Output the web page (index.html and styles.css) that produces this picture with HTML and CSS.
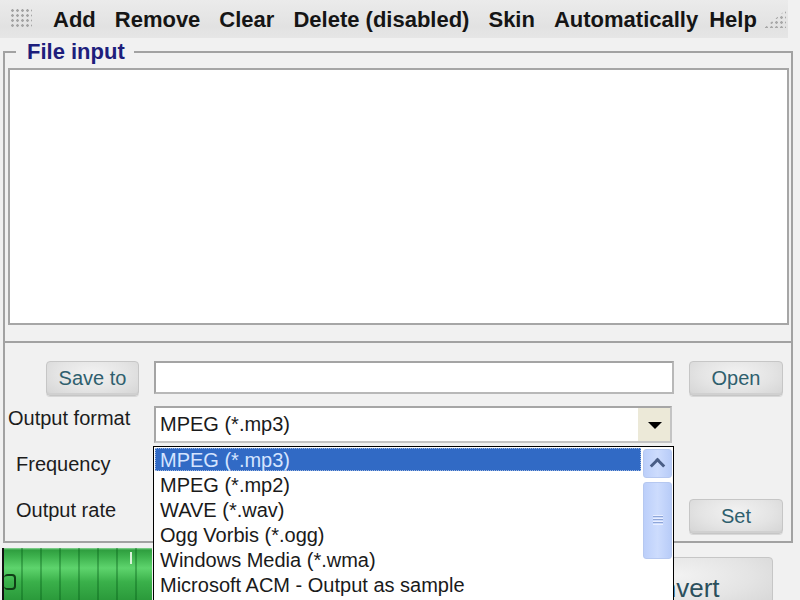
FILE: index.html
```html
<!DOCTYPE html>
<html>
<head>
<meta charset="utf-8">
<link rel="stylesheet" href="styles.css">
</head>
<body>
<div class="toolbar">
  <span class="grip"></span>
  <nav class="menu">
    <span>Add</span>
    <span>Remove</span>
    <span>Clear</span>
    <span>Delete (disabled)</span>
    <span>Skin</span>
    <span>Automatically</span>
    <span class="help">Help</span>
  </nav>
  <span class="grip-r"></span>
</div>

<fieldset class="files">
  <legend>File input</legend>
  <div class="listbox"></div>
</fieldset>

<section class="settings">
  <div class="cell-btn"><button class="btn">Save to</button></div>
  <div class="field"></div>
  <button class="btn">Open</button>

  <label class="lbl">Output format</label>
  <div class="combo"><span class="combo-text">MPEG (*.mp3)</span><span class="combo-arrow"></span></div>
  <span></span>

  <label class="lbl indent">Frequency</label>
  <div class="combo"></div>
  <span></span>

  <label class="lbl indent">Output rate</label>
  <div class="combo"></div>
  <button class="btn">Set</button>
</section>

<div class="bottom">
  <div class="meter">
    <span class="ring"></span>
    <span class="tick"></span>
  </div>
  <button class="btn convert">Convert</button>
</div>

<div class="dropdown">
  <ul class="options">
    <li class="sel">MPEG (*.mp3)</li>
    <li>MPEG (*.mp2)</li>
    <li>WAVE (*.wav)</li>
    <li>Ogg Vorbis (*.ogg)</li>
    <li>Windows Media (*.wma)</li>
    <li>Microsoft ACM - Output as sample</li>
    <li>Microsoft ACM - Output as WAV</li>
  </ul>
  <div class="scrollbar">
    <div class="sb-up"></div>
    <div class="sb-thumb"><span class="sb-grip"></span></div>
  </div>
</div>
</body>
</html>
```

FILE: styles.css
```css
html, body {
  margin: 0;
  padding: 0;
}
body {
  width: 800px;
  height: 600px;
  overflow: hidden;
  position: relative;
  background: #f1f1f1;
  font-family: "Liberation Sans", Arial, sans-serif;
  color: #1a1a1a;
}

/* toolbar */
.toolbar {
  width: 788px;
  height: 38px;
  display: flex;
  align-items: center;
  background: linear-gradient(#ebebeb, #e2e2e2 70%, #e6e6e6);
  box-sizing: border-box;
  padding-left: 10px;
}
.grip {
  width: 22px;
  height: 20px;
  margin-top: -2px;
  background: radial-gradient(circle, #a4a4a4 1px, transparent 1.6px) 0 0 / 5px 5px;
}
.menu {
  display: flex;
  gap: 19px;
  margin-left: 21px;
  font-weight: bold;
  font-size: 22px;
  color: #151515;
  line-height: 24px;
  margin-top: 1px;
}
.menu .help { margin-left: -8px; }
.grip-r {
  margin-left: auto;
  margin-right: 2px;
  width: 22px;
  height: 18px;
  background: radial-gradient(circle, #a8a8a8 1px, transparent 1.6px) 0 0 / 5px 5px;
  clip-path: polygon(100% 0, 100% 100%, 0 100%);
}

/* file input group */
.files {
  margin: 3px 7px 0 3px;
  padding: 0 2px 16px 3px;
  border: 2px solid #a2a2a2;
  min-width: 0;
}
.files legend {
  margin-left: 8px;
  padding: 0 9px 0 11px;
  font-weight: bold;
  font-size: 22px;
  line-height: 22px;
  color: #1e1e7c;
}
.listbox {
  margin-top: 5px;
  height: 257px;
  box-sizing: border-box;
  border: 2px solid #a6a6a6;
  background: #fff;
}

/* settings panel */
.settings {
  margin: 0 7px 0 3px;
  border: 2px solid #a2a2a2;
  border-top: none;
  padding: 18px 0 6px 0;
  display: grid;
  grid-template-columns: 134px 520px 94px;
  grid-template-rows: 35px 37px 36px 36px;
  column-gap: 15px;
  row-gap: 10px;
}
.cell-btn {
  display: flex;
  justify-content: flex-end;
}
.cell-btn .btn { width: 93px; }
.btn {
  font-family: "Liberation Sans", Arial, sans-serif;
  font-size: 20px;
  color: #2f5f6e;
  background: radial-gradient(ellipse at 50% 35%, #f2f2f2 0%, #e4e4e4 55%, #d4d4d4 100%);
  border: 1px solid #c6c6c6;
  border-radius: 4px;
  box-shadow: inset 0 -2px 0 #d0d0d0, 0 1px 0 #d8d8d8;
  padding: 0;
  height: 35px;
  width: 94px;
}
.field {
  height: 33px;
  box-sizing: border-box;
  border: 2px solid #a4a4a4;
  border-right-color: #b8b8b8;
  border-bottom-color: #b8b8b8;
  background: #fff;
}
.lbl {
  align-self: start;
  line-height: 24px;
  font-size: 20px;
  padding-left: 3px;
  color: #1c1c1c;
  white-space: nowrap;
}
.lbl.indent {
  padding-left: 11px;
  margin-top: -1px;
}
.combo {
  width: 518px;
  height: 37px;
  box-sizing: border-box;
  border: 2px solid #a6a6a6;
  border-right-color: #c4c4c4;
  border-bottom-color: #c4c4c4;
  background: #fff;
  display: flex;
  align-items: center;
}
.combo-text {
  flex: 1;
  font-size: 20px;
  padding-left: 4px;
  color: #1a1a1a;
}
.combo-arrow {
  width: 32px;
  height: 33px;
  background: #ece9d8;
  border-left: 1px solid #fff;
  position: relative;
}
.combo-arrow::after {
  content: "";
  position: absolute;
  left: 10px;
  top: 14px;
  border-left: 7px solid transparent;
  border-right: 7px solid transparent;
  border-top: 7px solid #000;
}

/* bottom */
.bottom {
  display: flex;
  justify-content: space-between;
}
.meter {
  position: relative;
  margin: 5px 0 0 2px;
  width: 150px;
  height: 60px;
  border-left: 2px solid #111;
  box-sizing: border-box;
  background:
    repeating-linear-gradient(90deg, transparent 0 17px, rgba(0, 90, 20, 0.35) 17px 19px),
    linear-gradient(#8fd99a 0, #2f9e3f 2px, #3cb04c 8px, #5ed46d 20px, #3ab04a 34px, #249034 60px);
}
.ring {
  position: absolute;
  left: 0;
  top: 26px;
  width: 10px;
  height: 12px;
  border: 2px solid #0f3f16;
  border-radius: 4px;
  border-left: none;
}
.tick {
  position: absolute;
  left: 126px;
  top: 4px;
  width: 2px;
  height: 12px;
  background: #d9f2d9;
}
.btn.convert {
  margin: 14px 27px 0 0;
  width: 190px;
  height: 52px;
  font-size: 26px;
  color: #2b4f5c;
  padding: 10px 8px 0 0;
}

/* dropdown overlay */
.dropdown {
  position: absolute;
  left: 153px;
  top: 446px;
  width: 521px;
  height: 170px;
  box-sizing: border-box;
  border: 1px solid #000;
  background: #fff;
  display: flex;
  z-index: 2;
}
.options {
  list-style: none;
  margin: 0;
  padding: 1px;
  flex: 1;
  font-size: 20px;
  color: #1a1a1a;
}
.options li {
  height: 25px;
  line-height: 25px;
  padding-left: 5px;
  white-space: nowrap;
}
.options li.sel {
  height: 23px;
  line-height: 25px;
  margin-bottom: 2px;
  background: #316ac5;
  color: #d4e4ff;
  outline: 1px dotted #9fb7e0;
  outline-offset: -1px;
}
.scrollbar {
  width: 29px;
  margin: 2px 1px 0 1px;
  display: flex;
  flex-direction: column;
  gap: 4px;
}
.sb-up, .sb-thumb {
  box-sizing: border-box;
  border: 1px solid #b6c8f0;
  border-radius: 3px;
  background: linear-gradient(90deg, #bccffa, #cddcfd 50%, #b8ccf8);
  position: relative;
}
.sb-up { height: 29px; }
.sb-up::after {
  content: "";
  position: absolute;
  left: 8px;
  top: 10px;
  width: 8px;
  height: 8px;
  border-left: 3px solid #4a5e86;
  border-top: 3px solid #4a5e86;
  transform: rotate(45deg);
}
.sb-thumb { height: 77px; }
.sb-grip {
  position: absolute;
  left: 9px;
  top: 32px;
  width: 10px;
  height: 10px;
  background: repeating-linear-gradient(#e8eeff 0 1px, #8fa6d8 1px 2px, transparent 2px 3px);
}
```
